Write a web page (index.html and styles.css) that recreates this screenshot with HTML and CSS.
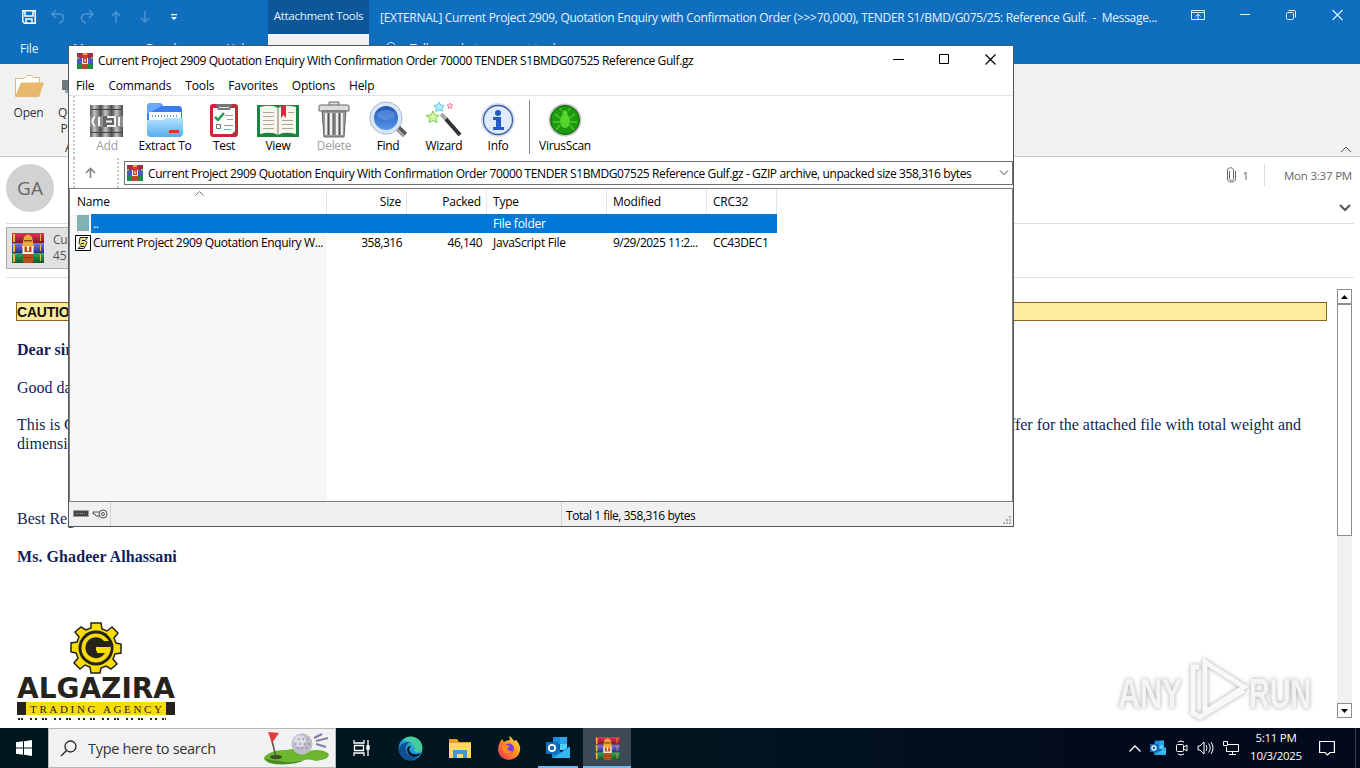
FILE: index.html
```html
<!DOCTYPE html>
<html lang="en">
<head>
    <meta charset="UTF-8">
    <meta name="viewport" content="width=device-width, initial-scale=1.0">
    <title>Message</title>
    <link rel="stylesheet" href="styles.css">
</head>
<body>
    <!-- shared icons -->
    <svg width="0" height="0" class="defs">
        <defs>
            <linearGradient id="gRed" x1="0" y1="0" x2="0" y2="1"><stop offset="0" stop-color="#d83a58"/><stop offset="1" stop-color="#8e1022"/></linearGradient>
            <linearGradient id="gBlue" x1="0" y1="0" x2="0" y2="1"><stop offset="0" stop-color="#7a7ae6"/><stop offset="1" stop-color="#2b2b86"/></linearGradient>
            <linearGradient id="gGreen" x1="0" y1="0" x2="0" y2="1"><stop offset="0" stop-color="#35a55a"/><stop offset="1" stop-color="#0c5a2a"/></linearGradient>
            <linearGradient id="gGray" x1="0" y1="0" x2="1" y2="0"><stop offset="0" stop-color="#555"/><stop offset=".4" stop-color="#c4c4c4"/><stop offset="1" stop-color="#484848"/></linearGradient>
            <linearGradient id="gFolder" x1="0" y1="0" x2="0" y2="1"><stop offset="0" stop-color="#b4e4ff"/><stop offset="1" stop-color="#55acef"/></linearGradient>
            <linearGradient id="gLens" x1="0" y1="0" x2="0" y2="1"><stop offset="0" stop-color="#1c4fae"/><stop offset="1" stop-color="#5c9cf0"/></linearGradient>
            <linearGradient id="gEdge" x1="0" y1="1" x2="1" y2="0"><stop offset="0" stop-color="#0c59a4"/><stop offset=".5" stop-color="#1e9bde"/><stop offset="1" stop-color="#6fdc5c"/></linearGradient>
            <linearGradient id="gFox" x1="1" y1="0" x2="0" y2="1"><stop offset="0" stop-color="#fff044"/><stop offset=".5" stop-color="#ff8a1e"/><stop offset="1" stop-color="#f0256a"/></linearGradient>
            <symbol id="winrar" viewBox="0 0 32 30">
                <path fill="url(#gRed)" d="M0 0h32v10H0z"/>
                <path fill="url(#gBlue)" d="M0 10h32v10H0z"/>
                <path fill="url(#gGreen)" d="M0 20h32v10H0z"/>
                <path fill="#e9b93a" d="M1 1h2v8H1zM1 11h2v8H1zM1 21h2v8H1zM28 1h1v7h-1zM28 11h1v7h-1zM28 21h1v7h-1z"/>
                <path fill="#b8501a" d="M11 12h10v18H11z"/>
                <path fill="#f1a93c" d="M12 4q4-5 8 0l2 10H10z"/>
                <path fill="#8c4310" d="M12 7h8v1.500h-8zM12 24h8v1h-8z"/>
                <path fill="none" stroke="#f5f0e6" stroke-width="2" d="M11.500 13v7h9v-7M16 13v5"/>
            </symbol>
            <symbol id="winrar-small" viewBox="0 0 16 16">
                <path fill="#a82a4a" d="M0 0h16v5H0z"/>
                <path fill="#4a55c8" d="M0 5h16v6H0z"/>
                <path fill="#1f8a45" d="M0 11h16v5H0z"/>
                <path fill="#7fc24a" d="M0 4h2v2H0zM14 4h2v2h-2z"/>
                <path fill="#c8402a" d="M5 0h6v16H5z"/>
                <path fill="#eba64a" d="M6 0h4v2H6z"/>
                <path fill="none" stroke="#fff" d="M5.500 5v5.500h5V5M8 6v3"/>
            </symbol>
            <symbol id="outlook" viewBox="0 0 24 24">
                <path fill="#1490df" d="M7 1h14v13H7z"/>
                <path fill="#28a8ea" d="M14 1h7v7h-7z"/>
                <path fill="#0a5fae" d="M7 8h7v7H7z"/>
                <path fill="#50d0ff" d="M14 8h7v6h-7z"/>
                <path fill="#1787d6" d="M6 22V10l9 6 9-6v12z"/>
                <path fill="#35b8f1" d="M7 22l17-11v11z"/>
                <path fill="#0f6cbd" d="M0 6h12v12H0z"/>
                <circle cx="6" cy="12" r="3.1" fill="none" stroke="#fff" stroke-width="1.8"/>
            </symbol>
        </defs>
    </svg>

    <div class="outlook">
        <div class="topbar">
            <div class="quick">
                <div class="quick-icons">
                    <svg width="16" height="16" viewBox="0 0 16 16" fill="none" stroke="#fff" stroke-width="1.5"><path d="M1.8 1.8h12.4v12.4H3.5l-1.7-1.7zM4 2v5h8V2M5 14v-4h6v4"/></svg>
                    <svg class="dim" width="16" height="16" viewBox="0 0 16 16" fill="none" stroke="#75aede" stroke-width="1.5"><path d="M6 1L2 5l4 4M2 5h7c6 0 6 7 0 9"/></svg>
                    <svg class="dim" width="16" height="16" viewBox="0 0 16 16" fill="none" stroke="#75aede" stroke-width="1.5"><path d="M10 1l4 4-4 4M14 5H7c-6 0-6 7 0 9"/></svg>
                    <svg class="dim" width="16" height="16" viewBox="0 0 16 16" fill="none" stroke="#75aede" stroke-width="1.5"><path d="M8 14V3M4 7l4-4 4 4"/></svg>
                    <svg class="dim" width="16" height="16" viewBox="0 0 16 16" fill="none" stroke="#75aede" stroke-width="1.5"><path d="M8 2v11M4 9l4 4 4-4"/></svg>
                    <svg width="16" height="16" viewBox="0 0 16 16"><path fill="#fff" d="M5 5h6v1.2H5zM5 8h6l-3 3z"/></svg>
                </div>
                <div class="tabs">
                    <span class="t-file">File</span><span class="t-msg">Message</span><span class="t-dev">Developer</span><span>Help</span>
                </div>
            </div>
            <div class="context">
                <div class="context-name">Attachment Tools</div>
                <div class="context-tab">Attachments</div>
            </div>
            <div class="caption">
                <div class="caption-row">
                    <span class="subject">[EXTERNAL] Current Project 2909, Quotation Enquiry with Confirmation Order (&gt;&gt;&gt;70,000), TENDER S1/BMD/G075/25: Reference Gulf.&nbsp; -&nbsp; Message...</span>
                    <div class="win-btns">
                        <svg width="14" height="12" viewBox="0 0 14 12" fill="none" stroke="#d8f0ff"><path d="M.5 1.5h13v9H.5zM.5 3.5h13M7 10V5M4.500 7.500L7 5l2.500 2.500"/></svg>
                        <svg width="11" height="12" viewBox="0 0 11 12" fill="none" stroke="#d8f0ff"><path d="M0 5.500h10"/></svg>
                        <svg width="11" height="12" viewBox="0 0 11 12" fill="none" stroke="#d8f0ff"><rect x=".5" y="3.500" width="7" height="7" rx="1"/><path d="M2.500 1.500h6q1 0 1 1v6"/></svg>
                        <svg width="11" height="12" viewBox="0 0 11 12" fill="none" stroke="#d8f0ff" stroke-width="1.200"><path d="M.5 1l10 10M10.500 1l-10 10"/></svg>
                    </div>
                </div>
                <div class="tell">
                    <svg width="12" height="14" viewBox="0 0 12 14" fill="none" stroke="#d8f0ff"><circle cx="6" cy="5" r="4.500"/><path d="M4 11h4"/></svg>
                    <span>Tell me what you want to do</span>
                </div>
            </div>
        </div>

        <div class="ribbon">
            <div class="rb open">
                <svg width="30" height="24" viewBox="0 0 30 24"><path fill="#fff" stroke="#dcb67a" d="M1.500 22V4.500h9l3-3 4 0 2 2h6V10"/><path fill="#e8b96d" d="M7 8.500h23L25 23H1z"/></svg>
                <span>Open</span>
            </div>
            <div class="rb">
                <svg width="26" height="26" viewBox="0 0 26 26"><path fill="#fff" stroke="#666" d="M8.500 1.500h12v23h-12z"/><path fill="#70777d" d="M1 6h10v10H1z"/><path fill="#8aa" d="M4 16h6v3H4z"/></svg>
                <span>Quick<br>Print</span>
            </div>
            <span class="group-name">Actions</span>
            <svg class="collapse" width="12" height="7" viewBox="0 0 12 7" fill="none" stroke="#555"><path d="M1 6l5-5 5 5"/></svg>
        </div>

        <div class="sender">
            <div class="avatar">GA</div>
            <div class="meta">
                <div class="meta-row">
                    <svg width="9" height="16" viewBox="0 0 9 16" fill="none" stroke="#666"><path d="M2.500 4v7.500c0 2.500 4 2.500 4 0V3c0-3-6-3-6 0v9c0 4 8 4 8 0V4"/></svg>
                    <span class="count">1</span>
                    <span class="date">Mon 3:37 PM</span>
                </div>
                <svg class="more" width="12" height="8" viewBox="0 0 12 8" fill="none" stroke="#555" stroke-width="2"><path d="M1 1l5 5 5-5"/></svg>
            </div>
        </div>

        <div class="attachments">
            <div class="attachment">
                <svg width="34" height="30"><use href="#winrar"/></svg>
                <div>Current<br>45 KB</div>
            </div>
        </div>

        <div class="reading">
            <div class="mail">
                <div class="caution">CAUTION:</div>
                <p><b>Dear sir,</b></p>
                <p>Good day</p>
                <p class="split"><span>This is Gh<br>dimension</span><span>offer for the attached file with total weight and</span></p>
                <p>Best Regards</p>
                <p class="name"><b>Ms. Ghadeer Alhassani</b></p>
                <svg class="logo" width="160" height="98" viewBox="0 0 160 98">
                    <g transform="translate(79 26)">
                        <path fill="#f7dc0c" stroke="#26221c" stroke-width="1.500" d="M-5-25H5L6-19 11-17 16-21 22-15 18-10 20-5 25-4V5L19 6 17 11 21 16 15 21 10 18 5 20 4 25H-5L-6 19-11 17-16 21-22 15-18 10-20 5-25 4V-5L-19-6-17-11-21-16-15-21-10-18-5-20z"/>
                        <circle r="17.500" fill="#26221c"/>
                        <circle r="14.500" fill="#f7dc0c"/>
                        <path fill="#26221c" d="M8-7A10.500 10.500 0 1 0 9 5H1V-1H14.500V-7z"/>
                        <path fill="#f7dc0c" d="M0-1H14.500V3H0z"/>
                    </g>
                    <text class="logo-name" x="0" y="76" textLength="158" lengthAdjust="spacingAndGlyphs">ALGAZIRA</text>
                    <path fill="#f7dc0c" d="M0 80h158v13H0z"/>
                    <path fill="#26221c" d="M0 80h9v13H0zM149 80h9v13h-9z"/>
                    <text class="logo-sub" x="13" y="90.500" textLength="132">TRADING AGENCY</text>
                    <path stroke="#26221c" stroke-width="2" stroke-dasharray="2 1 2 7 2 3 2 5" d="M1 97h148"/>
                </svg>
            </div>
            <div class="scroll">
                <div class="arrow"><svg width="7" height="4"><path d="M0 4L3.500 0 7 4z"/></svg></div>
                <div class="thumb"></div>
                <div class="track"></div>
                <div class="arrow"><svg width="7" height="4"><path d="M0 0h7L3.500 4z"/></svg></div>
            </div>
        </div>
    </div>

    <div class="window">
        <div class="w-title">
            <svg width="16" height="16"><use href="#winrar-small"/></svg>
            <span class="w-name">Current Project 2909 Quotation Enquiry With Confirmation Order 70000 TENDER S1BMDG07525 Reference Gulf.gz</span>
            <div class="w-btns">
                <svg width="11" height="11" fill="none" stroke="#000"><path d="M0 5.500h11"/></svg>
                <svg width="11" height="11" fill="none" stroke="#000"><path d="M.5.5h9v9h-9z"/></svg>
                <svg width="11" height="11" fill="none" stroke="#000" stroke-width="1.200"><path d="M.5.5l10 10M10.500.5l-10 10"/></svg>
            </div>
        </div>
        <div class="w-menu"><span>File</span><span>Commands</span><span>Tools</span><span>Favorites</span><span>Options</span><span>Help</span></div>
        <div class="w-tools">
            <div class="tool off w50">
                <svg width="34" height="34" viewBox="0 0 34 34"><path fill="url(#gGray)" d="M0 1h11v32H0z"/><path fill="url(#gGray)" d="M11 1h11v32H11z"/><path fill="url(#gGray)" d="M22 1h11v32H22z"/><path stroke="#444" d="M1 5.500h31M1 28.500h31"/><path fill="#8e8e8e" d="M0 12h33v11H0z"/><path fill="#666" d="M13 12h12v11H13z"/><path fill="none" stroke="#f4f4f4" stroke-width="2" d="M5 12.500q-5 5 0 10M9 13v9M17 13h8v9h-8M16 17.500h6M29 13v9"/></svg>
                Add
            </div>
            <div class="tool w66">
                <svg width="38" height="36" viewBox="0 0 38 36"><path fill="#3a7cf0" d="M1 31V5q0-4 4-4h8q3 0 4 3h16q3 0 3 4v22z"/><path fill="#6ba7ff" d="M1 12V5q0-4 4-4h8q2 0 3 3z"/><path fill="#f5faff" d="M3 10h32v12H3z"/><path stroke="#7799bb" stroke-width="2" stroke-dasharray="1 2" d="M6 14h27"/><path fill="url(#gFolder)" d="M1 18h16l3-2h17v15q0 4-4 4H5q-4 0-4-4z"/><path fill="#e03434" d="M23 28h10v3H23z"/></svg>
                Extract To
            </div>
            <div class="tool w52">
                <svg width="30" height="36" viewBox="0 0 30 36"><rect x="1" y="2" width="28" height="33" rx="3" fill="#cc2635"/><path fill="#fcfcfc" d="M4 6h22v23l-3 3H4z"/><path fill="#777" d="M7 2h16l-2 6H9z"/><path fill="none" stroke="#ddd" d="M10 5.500h10"/><path fill="none" stroke="#21a04c" stroke-width="2.500" d="M6 15l3 3 6-7"/><path stroke="#999" d="M16 13.500h8M18 17.500h6M15 23.500h9M15 27.500h7"/><path fill="none" stroke="#777" d="M7.500 22.500h4v4h-4z"/></svg>
                Test
            </div>
            <div class="tool w56">
                <svg width="44" height="34" viewBox="0 0 44 34"><path fill="#198540" d="M1 1h42v32H1z"/><path fill="#f7f5ec" d="M4 3q12-3 18 1 6-4 18-1v27q-12-3-18 1-6-4-18-1z"/><path stroke="#aaa89c" d="M7 8.500h11M7 12.500h11M7 16.500h11M7 20.500h11M7 24.500h11M32 8.500h6M26 16.500h11M26 20.500h11M26 24.500h11"/><path stroke="#777" d="M22 4v27"/><path fill="#d12a38" d="M25 2h5v12l-2.500-3-2.500 3z"/></svg>
                View
            </div>
            <div class="tool off w56">
                <svg width="34" height="37" viewBox="0 0 34 37"><path fill="#ddd" stroke="#666" d="M12 4V1h10v3M2 10V5q0-1 2-1h26q2 0 2 1v5z"/><path fill="#999" stroke="#666" d="M5 10h24l-2 26H7z"/><path fill="none" stroke="#eee" stroke-width="2" d="M9 12v22M14 12v22M20 12v22M25 12v22"/><path stroke="#555" d="M11.500 12v22M17 12v22M22.500 12v22"/></svg>
                Delete
            </div>
            <div class="tool w52">
                <svg width="38" height="37" viewBox="0 0 38 37"><path stroke="#555" stroke-width="6" d="M28 26l8 8"/><path stroke="#aaa" stroke-width="2" d="M27 27l8 8"/><circle cx="17" cy="17" r="14" fill="url(#gLens)" stroke="#dbe6f4" stroke-width="4"/><circle cx="17" cy="17" r="16.200" fill="none" stroke="#8aa3c4" stroke-width=".7"/><ellipse cx="17" cy="14" rx="9" ry="5" fill="#78a7ee" opacity=".45"/></svg>
                Find
            </div>
            <div class="tool w60">
                <svg width="36" height="37" viewBox="0 0 36 37"><path stroke="#333" stroke-width="4" d="M19 17l15 17"/><path stroke="#aaa" stroke-width="4" d="M15 13l5 5"/><path fill="#d4f5a8" stroke="#7ccf45" d="M7 10l2 4 4 .5-3 3 1 4-4-2-4 2 1-4-4-3 5-.5z"/><path fill="#b8edf8" stroke="#5cc8e0" d="M13 1l1.500 3 3.500.5-2 2.500.5 3-3.500-1-3 1.500V7L8 4.500l3.500-.5z"/><path fill="#fde" stroke="#ec7080" stroke-width=".8" d="M24 2l.8 1.800 2 .2-1.500 1.500.5 2L24 6.500l-2 1 .5-2L21 4l2-.2z"/></svg>
                Wizard
            </div>
            <div class="tool w48">
                <svg width="36" height="36" viewBox="0 0 36 36"><circle cx="18" cy="18" r="17" fill="#d0def2"/><circle cx="18" cy="18" r="14.500" fill="#dfebfb" stroke="#3e5f95" stroke-width="1.300"/><circle cx="18" cy="11" r="3" fill="#2459c8"/><path fill="#2459c8" d="M13 15h8v10h3v3H13v-3h3v-7h-3z"/></svg>
                Info
            </div>
            <div class="sep"></div>
            <div class="tool w64">
                <svg width="34" height="36" viewBox="0 0 34 36"><circle cx="17" cy="18" r="16.500" fill="#c4cac4"/><circle cx="17" cy="18" r="14.500" fill="#1e9a10" stroke="#145c10"/><ellipse cx="17" cy="19" rx="5" ry="7" fill="#55d62e"/><circle cx="17" cy="11" r="2.500" fill="#55d62e"/><path fill="none" stroke="#4fc832" stroke-width="1.300" d="M12 16L7 12M12 20H5M12 23l-4 5M22 16l5-4M22 20h7M22 23l4 5M14 9l-2-3M20 9l2-3"/></svg>
                VirusScan
            </div>
        </div>
        <div class="w-address">
            <div class="up"><svg width="11" height="12" viewBox="0 0 11 12" fill="none" stroke="#888" stroke-width="1.700"><path d="M5.500 11V2M1 6l4.500-4.500L10 6"/></svg></div>
            <div class="combo">
                <svg width="16" height="16"><use href="#winrar-small"/></svg>
                <span>Current Project 2909 Quotation Enquiry With Confirmation Order 70000 TENDER S1BMDG07525 Reference Gulf.gz - GZIP archive, unpacked size 358,316 bytes</span>
                <svg class="drop" width="10" height="6" fill="none" stroke="#444"><path d="M1 .5l4 4 4-4"/></svg>
            </div>
        </div>
        <div class="list">
            <div class="row head">
                <span class="c-name">Name<svg class="sort" width="9" height="5" fill="none" stroke="#777"><path d="M.5 4.500l4-4 4 4"/></svg></span><span class="c-num">Size</span><span class="c-num">Packed</span><span class="c-type">Type</span><span class="c-mod">Modified</span><span class="c-crc">CRC32</span>
            </div>
            <div class="row selected">
                <span class="c-name"><i class="folder"></i><em>..</em></span><span class="c-num"></span><span class="c-num"></span><span class="c-type">File folder</span><span class="c-mod"></span><span class="c-crc"></span>
            </div>
            <div class="row">
                <span class="c-name"><svg width="16" height="16" viewBox="0 0 16 16"><path fill="#fff" stroke="#000" d="M.5.5h15v15H.5z"/><path fill="#e9e17a" stroke="#222" d="M5 2.500h8l-3 3 2 2-3 6H3l3-3-2-2z"/><path stroke="#222" d="M7 5.500h3M6 8.500h3M6 11.500h3"/></svg><em>Current Project 2909 Quotation Enquiry W...</em></span><span class="c-num">358,316</span><span class="c-num">46,140</span><span class="c-type">JavaScript File</span><span class="c-mod">9/29/2025 11:2...</span><span class="c-crc">CC43DEC1</span>
            </div>
            <div class="filler"></div>
        </div>
        <div class="w-status">
            <div class="s-icons">
                <svg width="16" height="8"><path fill="#444" stroke="#999" d="M.5.500h15v6H.5z"/><path stroke="#999" stroke-dasharray="1 1" d="M3 3.500h10"/></svg>
                <svg width="16" height="10" fill="none" stroke="#555"><path d="M8 3H1v2h2l1 2h4"/><circle cx="11" cy="5" r="4"/><circle cx="11" cy="5" r="1.500"/></svg>
            </div>
            <div class="s-left"></div>
            <div class="s-total">Total 1 file, 358,316 bytes</div>
            <svg class="grip" width="9" height="9" fill="#b0b0b0"><path d="M6 0h2v2H6zM3 3h2v2H3zM6 3h2v2H6zM0 6h2v2H0zM3 6h2v2H3zM6 6h2v2H6z"/></svg>
        </div>
    </div>

    <div class="watermark">
        <svg width="210" height="70" viewBox="0 0 210 70">
            <g class="wm-text"><text x="5" y="53" textLength="64" lengthAdjust="spacingAndGlyphs">ANY</text><text x="136" y="53" textLength="62" lengthAdjust="spacingAndGlyphs">RUN</text></g>
            <path class="wm-mark" d="M92 7l39 25-39 25zM86 12h-6v46l7 4 44-27"/>
        </svg>
    </div>

    <div class="taskbar">
        <div class="start"><svg width="16" height="16" fill="#fff"><path d="M0 2.300L7 1.300V7.500H0zM8 1.200L16 0V7.500H8zM0 8.500H7V14.700L0 13.700zM8 8.500H16V16L8 14.800z"/></svg></div>
        <div class="search">
            <svg width="17" height="17" viewBox="0 0 17 17" fill="none" stroke="#222" stroke-width="1.300"><circle cx="10.500" cy="6.500" r="5.500"/><path d="M6.500 10.500L1 16"/></svg>
            <span>Type here to search</span>
            <svg class="golf" width="68" height="36" viewBox="0 0 68 36"><path fill="#6cb52f" d="M2 26q8-7 22-6 12-3 22 1 12-3 19 2 4 6-12 8-8-3-16 0Q20 37 6 33-1 30 2 26z"/><path fill="#468a28" d="M2 28q2 7 24 6 11-1 15-4-14 4-24 1-10 0-15-3z"/><ellipse cx="13" cy="27" rx="6" ry="2" fill="#3a4a22"/><path stroke="#554" stroke-width="1.500" d="M7 3l6 24"/><path fill="#e43b3b" d="M5 2l11 1-7 10z"/><circle cx="39" cy="14" r="10.500" fill="#bdbdcb"/><circle cx="37" cy="11" r="6" fill="#dcdce5"/><path stroke="#8a8a9c" stroke-width="1.500" stroke-dasharray="1.500 3" d="M32 14h15M34 18h12M35 9h10"/><path stroke="#8080a8" stroke-width="2" d="M51 8l8-4M53 11l12-3M53 14l10 3"/></svg>
        </div>
        <div class="apps">
            <div class="app"><svg width="17" height="18" viewBox="0 0 17 18" fill="none" stroke="#fff" stroke-width="1.300"><path d="M1 1v3h10V1M1 17v-3h10v3M1.500 6.500h9v5h-9zM15 1v16"/><path fill="#fff" d="M14 7h2v3h-2z"/></svg></div>
            <div class="app"><svg width="25" height="25" viewBox="0 0 25 25"><circle cx="12.500" cy="12.500" r="12" fill="url(#gEdge)"/><path fill="#0e4f94" d="M1 12q4-7 11-6-6 3-4 9 3 8 13 6-9 6-16 1-4-4-4-10z"/><path fill="#001722" d="M13 10q-3 3-1 6 3 4 11 1-2 4-7 4-6-1-7-7 0-4 4-4z"/><path fill="#43cd9f" d="M5 5q4-5 10-4 9 2 9 11-2 6-8 3 2-2 0-5-3-6-11-5z"/></svg></div>
            <div class="app"><svg width="22" height="19" viewBox="0 0 22 19"><path fill="#e8a020" d="M0 0h8l2 3h12v16H0z"/><path fill="#ffd76a" d="M0 4h22v15H0z"/><path fill="#3b9ad8" d="M4 11h14v8h-4v-4H8v4H4z"/></svg></div>
            <div class="app"><svg width="24" height="24" viewBox="0 0 24 24"><path fill="url(#gFox)" d="M3 6l2-3 2 3q3-2 6-2l-1-4q4 2 5 5l2-1q5 5 4 11-2 8-11 9-10-1-11-10 0-4 2-8z"/><circle cx="12" cy="12.500" r="5" fill="#7a3fe0"/><path fill="#ff8a1e" d="M6 9q4-1 7 2l-3 1q1 4 6 3-5 5-9 1-3-3-1-7z"/></svg></div>
            <div class="app running"><svg width="24" height="24"><use href="#outlook"/></svg></div>
            <div class="app active"><svg width="25" height="23"><use href="#winrar"/></svg></div>
        </div>
        <div class="tray">
            <svg width="12" height="7" viewBox="0 0 12 7" fill="none" stroke="#fff" stroke-width="1.300"><path d="M.5 6.500L6 1l5.500 5.500"/></svg>
            <svg width="16" height="16"><use href="#outlook"/></svg>
            <svg width="13" height="16" viewBox="0 0 13 16" fill="none" stroke="#fff"><rect x="1.500" y="4.500" width="7" height="7" rx="1"/><path d="M9 7l3-2v6L9 9M3 2q3-2 6 0M3 14q3 2 6 0"/></svg>
            <svg width="17" height="14" viewBox="0 0 17 14" fill="none" stroke="#fff"><path d="M1 5h2l4-4v12L3 9H1zM9 4q2 3 0 6M11.500 2.500q3.500 4.500 0 9M14 1q4 6 0 12"/></svg>
            <svg width="16" height="14" viewBox="0 0 16 14" fill="none" stroke="#fff"><path d="M5 3.500h10.500v7H3.500V6M.5.500h4v4h-4zM9.500 11v2M6 13.500h7"/></svg>
        </div>
        <div class="clock">5:11 PM<br>10/3/2025</div>
        <svg class="notify" width="16" height="16" viewBox="0 0 16 16" fill="none" stroke="#fff" stroke-width="1.200"><path d="M.6 1.500h14.800v11H11l-2.500 2.500L6 12.500H.6z"/></svg>
        <div class="peek"></div>
    </div>
</body>
</html>
```
FILE: styles.css
```css
* {
    box-sizing: border-box;
}
body {
    margin: 0;
    width: 1360px;
    height: 768px;
    overflow: hidden;
    position: relative;
    display: flex;
    flex-direction: column;
    font-family: "Open Sans", "Noto Sans", sans-serif;
    font-size: 12px;
    letter-spacing: -0.4px;
    background: #fff;
    color: #000;
}
svg {
    flex: none;
    display: block;
}
.defs {
    position: absolute;
}
.outlook {
    height: 728px;
    display: flex;
    flex-direction: column;
}

/* blue title bar and tabs */
.topbar {
    height: 64px;
    display: flex;
    background: #106ebe;
    color: #e4f3ff;
}
.quick {
    width: 268px;
}
.quick-icons {
    height: 34px;
    padding-left: 21px;
    display: flex;
    align-items: center;
    gap: 13px;
}
.dim {
    opacity: 0.6;
}
.tabs {
    display: flex;
    padding-left: 20px;
    line-height: 30px;
    font-size: 12px;
    letter-spacing: -0.2px;
}
.t-file {
    width: 53px;
}
.t-msg {
    width: 73px;
}
.t-dev {
    width: 80px;
}
.context {
    width: 101px;
    text-align: center;
    letter-spacing: -0.3px;
    font-size: 11.5px;
}
.context-name {
    height: 34px;
    line-height: 32px;
    background: #0b5799;
}
.context-tab {
    height: 30px;
    line-height: 29px;
    background: #f1f1f1;
    color: #444;
}
.caption {
    flex: 1;
}
.caption-row {
    height: 34px;
    display: flex;
    align-items: center;
    justify-content: space-between;
    padding: 0 17px 0 11px;
}
.subject {
    padding-top: 1px;
    white-space: nowrap;
    letter-spacing: -0.3px;
}
.win-btns {
    display: flex;
    gap: 35px;
    margin-top: -4px;
}
.tell {
    display: flex;
    align-items: center;
    gap: 13px;
    padding-left: 16px;
    line-height: 30px;
    letter-spacing: -0.2px;
}

/* ribbon */
.ribbon {
    height: 93px;
    display: flex;
    position: relative;
    background: #f1f1f1;
    border-bottom: 1px solid #c8c8c8;
    color: #333;
    letter-spacing: -0.2px;
}
.rb {
    width: 33px;
    padding-top: 10px;
    display: flex;
    flex-direction: column;
    align-items: center;
    line-height: 16px;
    text-align: center;
}
.rb.open {
    width: 57px;
}
.rb span {
    margin-top: 5px;
}
.rb.open span {
    margin-top: 7px;
}
.group-name {
    position: absolute;
    left: 65px;
    top: 77px;
    line-height: 14px;
}
.collapse {
    margin: 82px 8px 0 auto;
}

/* sender row */
.sender {
    height: 67px;
    margin: 0 6px;
    border-bottom: 1px solid #dcdcdc;
    display: flex;
    justify-content: space-between;
    color: #666;
    letter-spacing: 0;
}
.avatar {
    width: 48px;
    height: 48px;
    margin-top: 7px;
    border-radius: 50%;
    background: #d2d2d2;
    font-size: 19px;
    line-height: 49px;
    text-align: center;
}
.meta {
    display: flex;
    flex-direction: column;
    align-items: flex-end;
    padding-top: 7px;
    margin-right: -4px;
}
.meta-row {
    display: flex;
    align-items: center;
    padding-right: 6px;
}
.count {
    margin-left: 7px;
    font-size: 11px;
}
.date {
    height: 22px;
    margin-left: 15px;
    padding: 2px 0 0 19px;
    border-left: 1px solid #ddd;
    line-height: 19px;
    font-size: 11.5px;
    letter-spacing: -0.2px;
    white-space: nowrap;
}
.more {
    margin: 18px 7px 0 0;
}
.attachments {
    height: 54px;
    margin: 0 6px;
    padding-top: 3px;
    border-bottom: 1px solid #dcdcdc;
}
.attachment {
    width: 200px;
    height: 42px;
    display: flex;
    align-items: center;
    gap: 8px;
    padding-left: 4px;
    border: 1px solid #ababab;
    background: #e1e1e1;
    color: #555;
    line-height: 16px;
    letter-spacing: -0.2px;
}

/* mail body */
.reading {
    flex: 1;
    display: flex;
    justify-content: space-between;
    padding-right: 8px;
}
.mail {
    width: 1327px;
    padding: 24px 0 0 16px;
    font: 16px/19px "Liberation Serif", serif;
    letter-spacing: 0;
    color: #0f1f5c;
}
.mail p {
    margin: 0 0 19px 1px;
    height: 18.500px;
}
.mail .name {
    letter-spacing: 0.07px;
}
.caution {
    height: 19px;
    margin-bottom: 19px;
    border: 1px solid #8a6414;
    background: #ffeb9c;
    color: #111;
    font: bold 14px/18px "Liberation Sans", sans-serif;
    letter-spacing: -0.2px;
}
.mail .split {
    height: 38px;
    display: flex;
    justify-content: space-between;
    padding-right: 26px;
    margin-bottom: 56px;
}
.logo {
    margin: 57px 0 0 1px;
}
.logo-name {
    font: bold 28px "DejaVu Sans", sans-serif;
    fill: #26221c;
}
.logo-sub {
    font: 11px "Liberation Serif", serif;
    fill: #26221c;
}
.scroll {
    width: 15px;
    margin: 11px 0 10px;
    display: flex;
    flex-direction: column;
    background: #f1f1f1;
}
.arrow {
    height: 15px;
    display: flex;
    align-items: center;
    justify-content: center;
    border: 1px solid #8c8c8c;
    background: #fff;
}
.thumb {
    height: 232px;
    border: 1px solid #8c8c8c;
    background: #fff;
}
.track {
    flex: 1;
}

/* archive window */
.window {
    position: absolute;
    left: 68px;
    top: 45px;
    width: 946px;
    height: 482px;
    display: flex;
    flex-direction: column;
    background: #fff;
    border: 1px solid #505860;
}
.w-title {
    height: 30px;
    display: flex;
    align-items: center;
    gap: 5px;
    padding: 0 17px 0 8px;
}
.w-name {
    margin-top: -1px;
}
.w-btns {
    display: flex;
    gap: 35px;
    margin: -3px 0 0 auto;
}
.w-menu {
    height: 20px;
    display: flex;
    gap: 14px;
    padding-left: 7px;
    line-height: 20px;
    letter-spacing: -0.15px;
    border-bottom: 1px solid #e4e4e4;
}
.w-tools {
    height: 62px;
    margin-left: 4px;
    padding-left: 7px;
    display: flex;
    border-left: 2px dotted #c8c8c8;
    letter-spacing: -0.3px;
}
.tool {
    display: flex;
    flex-direction: column;
    align-items: center;
    justify-content: flex-end;
    line-height: 16px;
    padding-bottom: 4px;
}
.tool.off {
    color: #a0a0a0;
}
.w48 { width: 48px; }
.w50 { width: 50px; }
.w52 { width: 52px; }
.w56 { width: 56px; }
.w60 { width: 60px; }
.w64 { width: 64px; }
.w66 { width: 66px; }
.sep {
    width: 1px;
    height: 54px;
    margin: 4px 3px 0 7px;
    background: #888;
}
.w-address {
    height: 30px;
    margin-left: 4px;
    display: flex;
    border-left: 2px dotted #c8c8c8;
}
.up {
    width: 44px;
    padding: 9px 0 0 10px;
    border-right: 2px dotted #c8c8c8;
}
.combo {
    flex: 1;
    height: 24px;
    margin: 3px 0 0 5px;
    padding: 0 3px 0 2px;
    display: flex;
    align-items: center;
    gap: 5px;
    border: 1px solid #707070;
    white-space: nowrap;
}
.drop {
    margin-left: auto;
}
.list {
    flex: 1;
    display: flex;
    flex-direction: column;
    border: 1px solid #808080;
}
.row {
    height: 19px;
    width: 707px;
    display: flex;
    line-height: 19px;
    white-space: nowrap;
}
.row.head {
    height: 25px;
    line-height: 25px;
}
.head span {
    border-right: 1px solid #e5e5e5;
    letter-spacing: -0.2px;
}
.c-name {
    width: 257px;
    display: flex;
    align-items: center;
    padding-left: 5px;
    background: #f7f7f7;
}
.c-name em {
    flex: 1;
    font-style: normal;
    padding-left: 2px;
    letter-spacing: -0.35px;
}
.head .c-name {
    position: relative;
    padding-left: 7px;
    background: #fff;
}
.sort {
    position: absolute;
    left: 125px;
    top: 2px;
}
.c-num {
    width: 80px;
    text-align: right;
    padding-right: 5px;
    letter-spacing: -0.5px;
}
.c-type {
    width: 120px;
    padding-left: 6px;
    letter-spacing: -0.25px;
}
.c-mod {
    width: 100px;
    padding-left: 6px;
    letter-spacing: -0.5px;
}
.c-crc {
    width: 70px;
    padding-left: 6px;
    letter-spacing: -0.4px;
}
.selected {
    background: #0078d7;
    color: #fff;
}
.folder {
    background: #82b1b1;
    border: 0 solid #f7f7f7;
}
.selected .c-name {
    align-items: stretch;
    background: #0078d7;
    border-left: 7px solid #f7f7f7;
    padding-left: 0;
}
.selected .folder {
    width: 14px;
    height: 19px;
    border-width: 1px 2px 2px 0;
}
.filler {
    flex: 1;
    width: 257px;
    background: #f7f7f7;
}
.w-status {
    height: 24px;
    display: flex;
    background: #f0f0f0;
    line-height: 27px;
    letter-spacing: -0.45px;
}
.s-icons {
    width: 42px;
    display: flex;
    align-items: center;
    gap: 3px;
    padding-left: 4px;
    border-right: 1px solid #d4d4d4;
}
.s-left {
    width: 451px;
    border-right: 1px solid #d4d4d4;
}
.s-total {
    padding-left: 4px;
}
.grip {
    margin: 14px 1px 0 auto;
}
.watermark {
    position: absolute;
    left: 1113px;
    top: 655px;
    filter: drop-shadow(0 0 2px rgba(0, 0, 0, 0.35));
}
.wm-text {
    font: bold 42px "Liberation Sans", sans-serif;
    fill: #f4f4f4;
}
.wm-mark {
    fill: none;
    stroke: #f8f8f8;
    stroke-width: 5;
}

/* taskbar */
.taskbar {
    height: 40px;
    display: flex;
    align-items: center;
    background: linear-gradient(90deg, #00171f, #021620 50%, #020b1c 80%, #020a1d);
    color: #fff;
    letter-spacing: 0;
}
.start {
    width: 48px;
    padding-left: 16px;
}
.search {
    width: 288px;
    height: 40px;
    display: flex;
    align-items: center;
    padding: 0 4px 0 11px;
    background: #f1f1f1;
    border: 1px solid #b8b8b8;
    color: #333;
    font-size: 14.500px;
    letter-spacing: -0.3px;
}
.search span {
    margin-left: 11px;
}
.golf {
    margin-left: auto;
}
.apps {
    display: flex;
    height: 40px;
    padding-left: 1px;
}
.app {
    width: 49px;
    display: flex;
    align-items: center;
    justify-content: center;
}
.running {
    border-bottom: 2px solid #76b9ed;
    width: 40px;
    margin: 0 5px;
    padding-top: 2px;
}
.active {
    width: 48px;
    border-bottom: 2px solid #76b9ed;
    background: #3b4a55;
    padding-top: 2px;
}
.tray {
    display: flex;
    align-items: center;
    gap: 9px;
    margin-left: auto;
}
.clock {
    width: 56px;
    margin: -2px 15px 0 9px;
    font-size: 11.500px;
    line-height: 18px;
    text-align: center;
    letter-spacing: -0.300px;
}
.notify {
    margin: 0 20px 0 0;
}
.peek {
    width: 5px;
    height: 40px;
    border-left: 1px solid #3a4350;
}
```
